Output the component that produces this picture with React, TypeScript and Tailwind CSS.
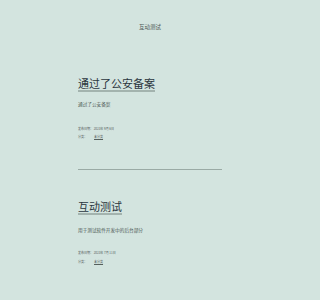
import React from "react";

const font = { fontFamily: '"Noto Sans CJK SC", "Noto Sans", sans-serif' };

function Post({ title, desc, date, mt, descMt, metaMt }: { title: string; desc: string; date: string; mt: string; descMt: string; metaMt: string }) {
  return (
    <div className={`w-[144px] mx-auto ${mt}`}>
      <div className="text-[11px] leading-none text-[#2b3640]">
        <span className="underline decoration-[#a3b3ae] decoration-[1.5px] underline-offset-[2px]">{title}</span>
      </div>
      <div className={`text-[4.65px] leading-none text-[#4a5552] ${descMt}`}>{desc}</div>
      <div className={`text-[3px] leading-none text-[#55605d] ${metaMt}`}>发布日期： 2023年 {date}</div>
      <div className="flex text-[3px] leading-none text-[#55605d] mt-[5.8px]">
        <span>分类：</span>
        <span className="ml-[7px] underline">未分类</span>
      </div>
    </div>
  );
}

export default function App() {
  return (
    <div className="w-full min-h-screen overflow-hidden bg-[#d3e4df]" style={font}>
      <div className="w-[300px] h-[300px]">
        <div className="pt-[25px] text-center text-[5.5px] leading-none text-[#4f5a57]">互动测试</div>
        <Post title="通过了公安备案" desc="通过了公安备案" date="9月 6日" mt="mt-[47px]" descMt="mt-[13.2px]" metaMt="mt-[21.2px]" />
        <div className="w-[144px] mx-auto mt-[29.5px] h-px bg-[#9aaaa5]" />
        <Post title="互动测试" desc="用于测试软件开发中的后台部分" date="7月 11日" mt="mt-[31.5px]" descMt="mt-[15.2px]" metaMt="mt-[19.7px]" />
      </div>
    </div>
  );
}
